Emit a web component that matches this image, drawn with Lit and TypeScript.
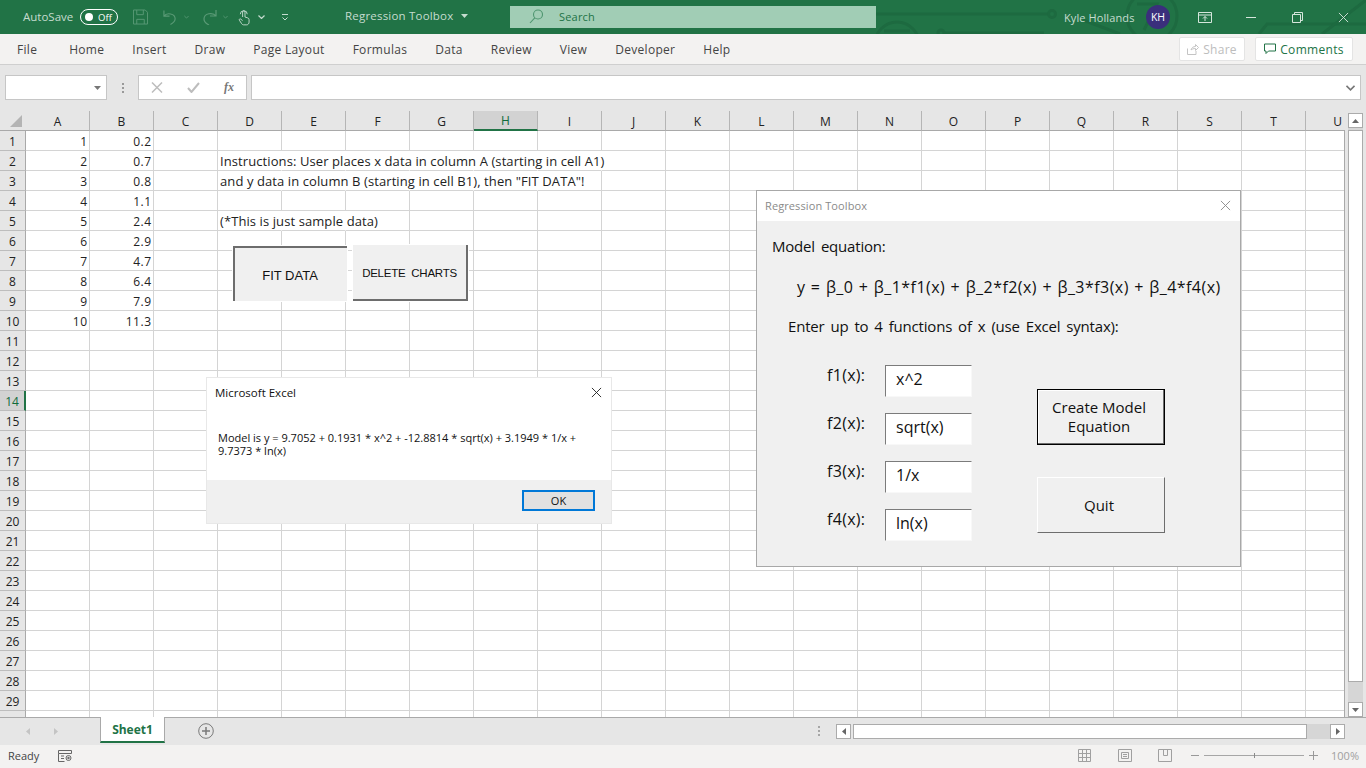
import { LitElement, html, css, svg } from 'lit';
import { customElement } from 'lit/decorators.js';

const COLS = 'ABCDEFGHIJKLMNOPQRSTU'.split('');
const ROWS = Array.from({ length: 30 }, (_, i) => i + 1);

// cell contents, keyed by address
const CELLS: Record<string, string> = {
  A1: '1', B1: '0.2',
  A2: '2', B2: '0.7',
  A3: '3', B3: '0.8',
  A4: '4', B4: '1.1',
  A5: '5', B5: '2.4',
  A6: '6', B6: '2.9',
  A7: '7', B7: '4.7',
  A8: '8', B8: '6.4',
  A9: '9', B9: '7.9',
  A10: '10', B10: '11.3',
  D2: 'Instructions: User places x data in column A (starting in cell A1)',
  D3: 'and y data in column B (starting in cell B1), then "FIT DATA"!',
  D5: '(*This is just sample data)',
};

// last column whose right gridline is hidden by overflowing text
const OVERFLOW: Record<number, string> = { 2: 'I', 3: 'H', 5: 'E' };

const TABS = ['File', 'Home', 'Insert', 'Draw', 'Page Layout', 'Formulas', 'Data', 'Review', 'View', 'Developer', 'Help'];

const FUNCS = [
  { label: 'f1(x):', value: 'x^2' },
  { label: 'f2(x):', value: 'sqrt(x)' },
  { label: 'f3(x):', value: '1/x' },
  { label: 'f4(x):', value: 'ln(x)' },
];

const closeIcon = (size: number, color: string) => svg`
  <svg width=${size} height=${size} viewBox="0 0 12 12" fill="none" stroke=${color} stroke-width="1">
    <path d="M1 1 11 11M11 1 1 11"/>
  </svg>`;

const caret = (color: string) => svg`
  <svg width="7" height="4" viewBox="0 0 7 4"><path d="M0 0h7L3.5 4z" fill=${color}/></svg>`;

const chevron = (color: string, w = 5) => svg`
  <svg width=${w} height="4" viewBox="0 0 7 4" fill="none" stroke=${color} stroke-width="1.2"><path d="M.5.5 3.5 3.5 6.5.5"/></svg>`;

@customElement('app-root')
export class AppRoot extends LitElement {
  static override styles = css`
    :host {
      display: block;
      position: relative;
      width: 1366px;
      height: 768px;
      overflow: hidden;
      background: #e6e6e6;
      font-family: 'Open Sans', 'Liberation Sans', sans-serif;
      color: #444;
    }

    .titlebar {
      position: relative;
      height: 34px;
      background: #217346;
      display: flex;
      align-items: center;
      color: #c5dccf;
      font-size: 11.5px;
    }
    .circuit { position: absolute; left: 876px; top: 0; }
    .titlebar > *:not(.circuit) { position: relative; }
    .autosave { margin-left: 23px; width: 57px; padding-bottom: 2px; }
    .toggle {
      box-sizing: border-box;
      width: 38px;
      height: 16px;
      border: 1px solid #fff;
      border-radius: 8px;
      display: flex;
      align-items: center;
      padding-left: 4px;
      gap: 5px;
      color: #fff;
      font-size: 9.5px;
    }
    .toggle i { width: 8px; height: 8px; border-radius: 50%; background: #fff; }
    .qat { display: flex; align-items: center; margin-left: 15px; width: 212px; }
    .qat span { display: flex; }
    .doc { width: 165px; display: flex; align-items: center; gap: 8px; letter-spacing: 0.2px; padding-bottom: 3px; }
    .search {
      width: 366px;
      height: 22px;
      background: #a1cdb5;
      color: #217346;
      display: flex;
      align-items: center;
      font-size: 11px;
      padding: 0 0 1px 19px;
      gap: 16px;
      box-sizing: border-box;
      letter-spacing: 0.2px;
    }
    .user { margin-left: 188px; width: 58px; white-space: nowrap; font-size: 11px; letter-spacing: 0.1px; }
    .avatar {
      margin-left: 24px;
      width: 24px;
      height: 24px;
      border-radius: 50%;
      background: #3a2f7c;
      color: #fff;
      font-size: 10.5px;
      display: flex;
      align-items: center;
      justify-content: center;
    }
    .winbtns { margin-left: 28px; display: flex; align-items: center; }

    .tabs {
      box-sizing: border-box;
      height: 31px;
      background: #f3f2f1;
      border-bottom: 1px solid #cfcfcf;
      display: flex;
      align-items: center;
      font-size: 12px;
      padding-left: 17px;
      color: #444;
      letter-spacing: 0.3px;
    }
    .tabs span { margin-right: 28px; }
    .tabs span:first-child { margin-right: 32px; }
    .tabs .spacer { flex: 1; margin: 0; }
    .pill {
      box-sizing: border-box;
      height: 24px;
      background: #fff;
      border: 1px solid #e4e4e4;
      border-radius: 2px;
      display: flex;
      align-items: center;
      justify-content: center;
      gap: 4px;
    }
    .pill.share { width: 66px; color: #bdbdbd; margin-right: 10px; }
    .pill.comments { width: 98px; color: #217346; margin-right: 13px; }

    .formula {
      box-sizing: border-box;
      height: 46px;
      padding: 10px 5px 11px;
      display: flex;
      gap: 4px;
    }
    .box {
      box-sizing: border-box;
      background: #fff;
      border: 1px solid #c6c6c6;
      display: flex;
      align-items: center;
    }
    .namebox { width: 102px; justify-content: flex-end; padding-right: 5px; }
    .dots { width: 23px; display: flex; justify-content: center; align-items: center; }
    .fxbox { width: 109px; padding-left: 12px; gap: 24px; }
    .fx { font: italic bold 12px 'Liberation Serif', serif; color: #777; }
    .bar { flex: 1; justify-content: flex-end; padding-right: 5px; }

    .sheet { display: flex; height: 606px; }
    .grid {
      position: relative;
      width: 1345px;
      height: 606px;
      overflow: hidden;
      display: grid;
      grid-template-columns: 26px repeat(21, 64px);
      grid-auto-rows: 20px;
      grid-template-rows: 20px;
      font-size: 12px;
      color: #222;
      background: #fff;
    }
    .grid::after {
      content: '';
      position: absolute;
      right: 0;
      top: 19px;
      bottom: 0;
      width: 1px;
      background: #a9a9a9;
    }
    .corner { background: #e6e6e6; border-bottom: 1px solid #a9a9a9; box-sizing: border-box; position: relative; }
    .corner svg { position: absolute; right: 4px; bottom: 3px; }
    .ch, .rh {
      box-sizing: border-box;
      background: #e6e6e6;
      display: flex;
      align-items: center;
      justify-content: center;
      color: #222;
      padding-top: 1px;
    }
    .ch { border-right: 1px solid #b5b5b5; border-bottom: 1px solid #a9a9a9; }
    .rh { border-bottom: 1px solid #bdbdbd; border-right: 1px solid #a9a9a9; }
    .ch.sel { background: #d2d2d2; color: #0f6b3a; border-bottom: 2px solid #217346; }
    .rh.sel { background: #d2d2d2; color: #0f6b3a; border-right: 2px solid #217346; }
    .cell {
      box-sizing: border-box;
      border-right: 1px solid #d4d4d4;
      border-bottom: 1px solid #d4d4d4;
      line-height: 19px;
      padding: 1px 1.5px 0 2px;
      white-space: nowrap;
      text-align: right;
      overflow: hidden;
      letter-spacing: 0.5px;
    }
    .cell.text {
      text-align: left;
      overflow: visible;
      position: relative;
      z-index: 1;
      font-size: 13px;
      letter-spacing: 0.09px;
    }
    .cell.under { border-right-color: transparent; }

    .vscroll {
      flex: 1;
      background: #e6e6e6;
      display: flex;
      flex-direction: column;
      align-items: center;
      padding-top: 2px;
    }
    .arrow {
      box-sizing: border-box;
      width: 15px;
      height: 15px;
      background: #fff;
      border: 1px solid #ababab;
      display: flex;
      align-items: center;
      justify-content: center;
      flex: none;
    }
    .vtrack { flex: 1; width: 15px; background: #d6d6d6; display: flex; flex-direction: column; padding-top: 2px; }
    .vthumb { box-sizing: border-box; flex: 1; background: #fff; border: 1px solid #ababab; }
    .vrest { height: 20px; }

    .tabstrip {
      box-sizing: border-box;
      height: 28px;
      background: #e6e6e6;
      border-top: 1px solid #a9a9a9;
      display: flex;
      align-items: flex-start;
      position: relative;
    }
    .nav { width: 100px; height: 27px; display: flex; align-items: center; padding-left: 26px; gap: 24px; box-sizing: border-box; }
    .sheettab {
      box-sizing: border-box;
      width: 65px;
      height: 26px;
      margin-top: -1px;
      background: #fff;
      border: 1px solid #a9a9a9;
      border-top: 0;
      border-bottom: 2px solid #217346;
      color: #217346;
      font-size: 12px;
      font-weight: 700;
      display: flex;
      align-items: center;
      justify-content: center;
    }
    .add { margin-left: 33px; margin-top: 5px; }
    .hgrip { position: absolute; left: 818px; top: 8px; }
    .hscroll {
      position: absolute;
      left: 836px;
      top: 6px;
      width: 509px;
      height: 15px;
      display: flex;
    }
    .hthumb { box-sizing: border-box; width: 454px; margin-left: 2px; background: #fff; border: 1px solid #ababab; }
    .htrack { flex: 1; background: #d6d6d6; }

    .status {
      box-sizing: border-box;
      height: 23px;
      background: #f3f2f1;
      display: flex;
      align-items: center;
      font-size: 11px;
      color: #444;
      padding: 0 0 2px 8px;
    }
    .status .ready { width: 50px; }
    .views { margin-left: auto; display: flex; align-items: center; gap: 26px; }
    .views svg:first-child { margin-right: 1px; }
    .zoom { display: flex; align-items: center; margin-left: 19px; }
    .slider { position: relative; width: 100px; height: 1px; background: #a6a6a6; margin: 0 5px; }
    .slider i { position: absolute; left: 50px; top: -2px; width: 1px; height: 5px; background: #8a8a8a; }
    .pct { margin: 0 7px 0 13px; color: #a0a0a0; }

    .sheetbtn {
      position: absolute;
      box-sizing: border-box;
      background: #f0f0f0;
      font-family: 'Liberation Sans', sans-serif;
      color: #111;
      display: flex;
      align-items: center;
      justify-content: center;
    }
    .fit {
      left: 233px;
      top: 246px;
      width: 114px;
      height: 55px;
      border-left: 2px solid #6d6d6d;
      border-top: 2px solid #6d6d6d;
      outline: 1px solid #fff;
      padding: 1px 2px 0 0;
      font-size: 13px;
    }
    .del {
      left: 353px;
      top: 245px;
      width: 115px;
      height: 56px;
      border-right: 2px solid #6d6d6d;
      border-bottom: 2px solid #6d6d6d;
      outline: 1px solid #fff;
      padding-top: 2px;
      font-size: 11.5px;
      letter-spacing: -0.25px;
    }

    .msgbox {
      position: absolute;
      left: 207px;
      top: 378px;
      width: 404px;
      height: 145px;
      background: #fff;
      box-shadow: 0 0 0 1px #e8e8e8;
      display: flex;
      flex-direction: column;
      color: #111;
    }
    .msghead {
      height: 30px;
      display: flex;
      align-items: center;
      justify-content: space-between;
      padding: 0 9px 2px 8px;
      box-sizing: border-box;
      font-size: 11.5px;
    }
    .msgbody { flex: 1; padding: 23px 12px 0 11px; font-size: 11px; line-height: 13px; }
    .msgfoot {
      box-sizing: border-box;
      height: 43px;
      background: #f0f0f0;
      display: flex;
      align-items: center;
      justify-content: flex-end;
      padding: 0 16px 2px 0;
    }
    .okbtn {
      box-sizing: border-box;
      width: 73px;
      height: 21px;
      background: #e1e1e1;
      border: 2px solid #0078d7;
      font-size: 11px;
      display: flex;
      align-items: center;
      justify-content: center;
    }

    .userform {
      position: absolute;
      left: 756px;
      top: 190px;
      width: 485px;
      height: 377px;
      box-sizing: border-box;
      border: 1px solid #a8a8a8;
      background: #f0f0f0;
      color: #111;
      display: flex;
      flex-direction: column;
    }
    .formhead {
      box-sizing: border-box;
      height: 30px;
      flex: none;
      background: #fff;
      color: #8a8a8a;
      font-size: 11px;
      display: flex;
      align-items: center;
      justify-content: space-between;
      padding: 0 9px 2px 8px;
      letter-spacing: 0.1px;
    }
    .formbody {
      padding: 15px 15px 0;
      font-size: 15px;
      letter-spacing: -0.2px;
      word-spacing: 2.3px;
      display: flex;
      flex-direction: column;
    }
    .eq {
      margin: 20px 0 0 25px;
      white-space: nowrap;
      font-size: 16px;
      letter-spacing: 0.45px;
      word-spacing: 0.8px;
    }
    .hint { margin: 18px 0 0 16px; white-space: nowrap; }
    .inputs { display: flex; margin-top: 29px; font-size: 16px; letter-spacing: 0; word-spacing: 0; }
    .funcs { display: grid; grid-template-columns: 58px 87px; row-gap: 16px; margin-left: 55px; }
    .funcs label { padding-top: 1px; line-height: 18px; white-space: nowrap; letter-spacing: 0.3px; }
    .fbox {
      box-sizing: border-box;
      height: 32px;
      background: #fff;
      border: 1px solid #f8f8f8;
      border-top: 1px solid #7b7b7b;
      border-left: 1px solid #7b7b7b;
      padding: 1px 0 0 10px;
      line-height: 24px;
    }
    .btns { margin-left: 65px; margin-top: 24px; display: flex; flex-direction: column; gap: 32px; }
    .fbtn {
      box-sizing: border-box;
      width: 128px;
      height: 56px;
      background: #f0f0f0;
      border-right: 1px solid #6d6d6d;
      border-bottom: 1px solid #6d6d6d;
      border-top: 1px solid #fff;
      border-left: 1px solid #fff;
      display: flex;
      align-items: center;
      justify-content: center;
      text-align: center;
      line-height: 19px;
      font-size: 15px;
      padding-right: 4px;
    }
    .fbtn.default { border: 1px solid #000; box-shadow: inset -1px -1px 0 #6d6d6d, inset 1px 1px 0 #fff; }
  `;

  private circuit() {
    return svg`
      <svg class="circuit" width="490" height="34" viewBox="0 0 490 34" fill="none" stroke="#1d6a40" stroke-width="3">
        <path d="M0 14H172"/>
        <circle cx="176" cy="14" r="3.5"/>
        <circle cx="21" cy="44" r="22"/>
        <path d="M8 31H34"/>
        <circle cx="65" cy="33" r="3"/>
        <path d="M69 33H168"/>
        <path d="M207 20 244 34"/>
        <circle cx="276" cy="16" r="25"/>
        <path d="M261 4H281L268 30"/>
        <path d="M383 34 391 24H490"/>
        <path d="M446 34 490 0"/>
      </svg>`;
  }

  private qat() {
    const c = '#5a9a76';
    return html`
      <div class="qat">
        <svg width="15" height="16" viewBox="0 0 16 16" fill="none" stroke=${c}>
          <path d="M.5.5h12.5l2.5 2.5v12.5H.5z"/><path d="M4 .5v5h7v-5M4 15.5v-5h8v5"/>
        </svg>
        <svg style="margin-left:15px" width="14" height="16" viewBox="0 0 15 16" fill="none" stroke=${c} stroke-width="1.2">
          <path d="M1 1v6h6M1 7c3-4 12-3 12 3 0 3-3 5-5 6"/>
        </svg>
        <span style="margin:0 13px 0 7px">${chevron(c)}</span>
        <svg width="15" height="16" viewBox="0 0 15 16" fill="none" stroke=${c} stroke-width="1.2">
          <path d="M14 1v6H8M14 7C11 3 2 4 2 10c0 3 3 5 5 6"/>
        </svg>
        <span style="margin:0 10px 0 6px">${chevron(c)}</span>
        <svg width="12" height="18" viewBox="0 0 13 18" fill="none" stroke="#c5dccf">
          <path d="M5 9V3.5a1.3 1.3 0 0 1 2.6 0V9l3 1c1 .4 1.4 1 1.4 2v2.5c0 1.5-1 3-2.5 3H6c-1 0-1.5-.5-2-1.2L1.5 12.5c-.6-1 .5-2 1.5-1.2L5 13"/>
          <path d="M2.5 6a3.5 3.5 0 1 1 7.5 0"/>
        </svg>
        <span style="margin:0 17px 0 8px">${chevron('#c5dccf', 7)}</span>
        <svg width="6" height="7" viewBox="0 0 6 7" fill="none" stroke="#c5dccf">
          <path d="M0 .5h6M.5 3.5 3 6l2.5-2.5"/>
        </svg>
      </div>`;
  }

  private renderCells() {
    return ROWS.map((r) => {
      const last = OVERFLOW[r];
      return html`
        <div class="rh ${r === 14 ? 'sel' : ''}">${r < 30 ? r : ''}</div>
        ${COLS.map((c) => {
          const v = CELLS[c + r];
          const isText = c === 'D' && !!v;
          const under = !!last && c >= 'D' && c <= last;
          return html`<div class="cell ${isText ? 'text' : ''} ${under ? 'under' : ''}">${v ?? ''}</div>`;
        })}
      `;
    });
  }

  override render() {
    return html`
      <div class="titlebar">
        ${this.circuit()}
        <span class="autosave">AutoSave</span>
        <div class="toggle"><i></i>Off</div>
        ${this.qat()}
        <div class="doc">Regression Toolbox ${caret('#c5dccf')}</div>
        <div class="search">
          <svg width="14" height="15" viewBox="0 0 14 15" fill="none" stroke="#4f9670" stroke-width="1.1">
            <circle cx="9" cy="5.5" r="4.5"/><path d="M5.8 8.8 1 14"/>
          </svg>
          Search
        </div>
        <span class="user">Kyle Hollands</span>
        <div class="avatar">KH</div>
        <div class="winbtns">
          <svg width="14" height="11" viewBox="0 0 14 11" fill="none" stroke="#d6e6dc">
            <path d="M.5.5h13v10H.5zM.5 3h13M7 9V4.5M5 6.5 7 4.5l2 2"/>
          </svg>
          <svg style="margin-left:34px" width="10" height="11" viewBox="0 0 10 11" stroke="#d6e6dc"><path d="M0 5.5h10"/></svg>
          <svg style="margin-left:36px" width="11" height="11" viewBox="0 0 11 11" fill="none" stroke="#d6e6dc">
            <path d="M.5 2.5h8v8h-8zM2.5 2.5v-2h8v8h-2"/>
          </svg>
          <span style="margin-left:35px;display:flex">${closeIcon(11, '#d6e6dc')}</span>
        </div>
      </div>

      <div class="tabs">
        ${TABS.map((t) => html`<span>${t}</span>`)}
        <span class="spacer"></span>
        <div class="pill share">
          <svg width="12" height="12" viewBox="0 0 12 12" fill="none" stroke="#c4c4c4">
            <path d="M.5 5.5v6h8.5V8M4 7c.5-2.5 2.5-3.5 4.5-3.5V1.5l3 3-3 3V5.5c-2 0-3.5.5-4.5 1.5z"/>
          </svg>
          Share
        </div>
        <div class="pill comments">
          <svg width="12" height="12" viewBox="0 0 12 12" fill="none" stroke="#217346">
            <path d="M.5 1h11v7H4.5L2 10.5V8H.5z"/>
          </svg>
          Comments
        </div>
      </div>

      <div class="formula">
        <div class="box namebox">${caret('#777')}</div>
        <div class="dots">
          <svg width="2" height="10" viewBox="0 0 2 10" fill="#999"><path d="M0 0h2v2H0zM0 4h2v2H0zM0 8h2v2H0z"/></svg>
        </div>
        <div class="box fxbox">
          <svg width="12" height="11" viewBox="0 0 11 11" fill="none" stroke="#bdbdbd" stroke-width="1.5"><path d="M.5.5 10.5 10.5M10.5.5.5 10.5"/></svg>
          <svg width="13" height="11" viewBox="0 0 13 11" fill="none" stroke="#bdbdbd" stroke-width="2"><path d="M1 6l3.5 4L12 1"/></svg>
          <span class="fx">fx</span>
        </div>
        <div class="box bar">
          <svg width="9" height="6" viewBox="0 0 9 6" fill="none" stroke="#777" stroke-width="1.6"><path d="M.5.8 4.5 4.8 8.5.8"/></svg>
        </div>
      </div>

      <div class="sheet">
        <div class="grid">
          <div class="corner">
            <svg width="12" height="12" viewBox="0 0 12 12"><path d="M12 0v12H0z" fill="#b4b4b4"/></svg>
          </div>
          ${COLS.map((c) => html`<div class="ch ${c === 'H' ? 'sel' : ''}">${c}</div>`)}
          ${this.renderCells()}
        </div>
        <div class="vscroll">
          <div class="arrow"><svg width="7" height="4" viewBox="0 0 7 4"><path d="M0 4h7L3.5 0z" fill="#666"/></svg></div>
          <div class="vtrack">
            <div class="vthumb"></div>
            <div class="vrest"></div>
          </div>
          <div class="arrow">${caret('#666')}</div>
        </div>
      </div>

      <div class="tabstrip">
        <div class="nav">
          <svg width="4" height="7" viewBox="0 0 4 7"><path d="M4 0v7L0 3.5z" fill="#c4c4c4"/></svg>
          <svg width="4" height="7" viewBox="0 0 4 7"><path d="M0 0v7l4-3.5z" fill="#c4c4c4"/></svg>
        </div>
        <div class="sheettab">Sheet1</div>
        <svg class="add" width="16" height="16" viewBox="0 0 16 16" fill="none" stroke="#7a7a7a">
          <circle cx="8" cy="8" r="7.3"/><path d="M8 4v8M4 8h8" stroke-width="1.5"/>
        </svg>
        <svg class="hgrip" width="2" height="10" viewBox="0 0 2 10" fill="#a6a6a6"><path d="M0 0h2v2H0zM0 4h2v2H0zM0 8h2v2H0z"/></svg>
        <div class="hscroll">
          <div class="arrow"><svg width="4" height="7" viewBox="0 0 4 7"><path d="M4 0v7L0 3.5z" fill="#666"/></svg></div>
          <div class="hthumb"></div>
          <div class="htrack"></div>
          <div class="arrow"><svg width="4" height="7" viewBox="0 0 4 7"><path d="M0 0v7l4-3.5z" fill="#666"/></svg></div>
        </div>
      </div>

      <div class="status">
        <span class="ready">Ready</span>
        <svg width="14" height="12" viewBox="0 0 14 12" fill="none" stroke="#666">
          <path d="M.5.5h13v3H.5zM.5 3.5v8h6M3 6h3M3 8.5h3"/><circle cx="10.5" cy="8" r="2.5"/><circle cx="10.5" cy="8" r=".8" fill="#666"/>
        </svg>
        <div class="views">
          <svg width="13" height="13" viewBox="0 0 13 13" fill="none" stroke="#a0a0a0"><path d="M.5.5h12v12H.5zM4.5.5v12M8.5.5v12M.5 4.5h12M.5 8.5h12"/></svg>
          <svg width="14" height="13" viewBox="0 0 14 13" fill="none" stroke="#a0a0a0"><path d="M.5.5h13v12H.5zM3.5 3.5h7v6h-7zM5 5.5h4M5 7.5h4"/></svg>
          <svg width="14" height="13" viewBox="0 0 14 13" fill="none" stroke="#a0a0a0"><path d="M.5.5h13v12H.5zM5.5.5v6h4v-6"/></svg>
        </div>
        <div class="zoom">
          <svg width="8" height="1" viewBox="0 0 8 1"><path d="M0 0h8v1H0z" fill="#999"/></svg>
          <div class="slider"><i></i></div>
          <svg width="9" height="9" viewBox="0 0 9 9"><path d="M4 0h1v9H4zM0 4h9v1H0z" fill="#999"/></svg>
        </div>
        <span class="pct">100%</span>
      </div>

      <div class="sheetbtn fit">FIT DATA</div>
      <div class="sheetbtn del">DELETE&nbsp; CHARTS</div>

      <div class="msgbox">
        <div class="msghead">Microsoft Excel ${closeIcon(11, '#222')}</div>
        <div class="msgbody">Model is y = 9.7052 + 0.1931 * x^2 + -12.8814 * sqrt(x) + 3.1949 * 1/x + 9.7373 * ln(x)</div>
        <div class="msgfoot"><div class="okbtn">OK</div></div>
      </div>

      <div class="userform">
        <div class="formhead">Regression Toolbox ${closeIcon(11, '#8a8a8a')}</div>
        <div class="formbody">
          <div>Model equation:</div>
          <div class="eq">y = β_0 + β_1*f1(x) + β_2*f2(x) + β_3*f3(x) + β_4*f4(x)</div>
          <div class="hint">Enter up to 4 functions of x (use Excel syntax):</div>
          <div class="inputs">
            <div class="funcs">
              ${FUNCS.map((f) => html`<label>${f.label}</label><div class="fbox">${f.value}</div>`)}
            </div>
            <div class="btns">
              <div class="fbtn default">Create Model<br />Equation</div>
              <div class="fbtn">Quit</div>
            </div>
          </div>
        </div>
      </div>
    `;
  }
}
